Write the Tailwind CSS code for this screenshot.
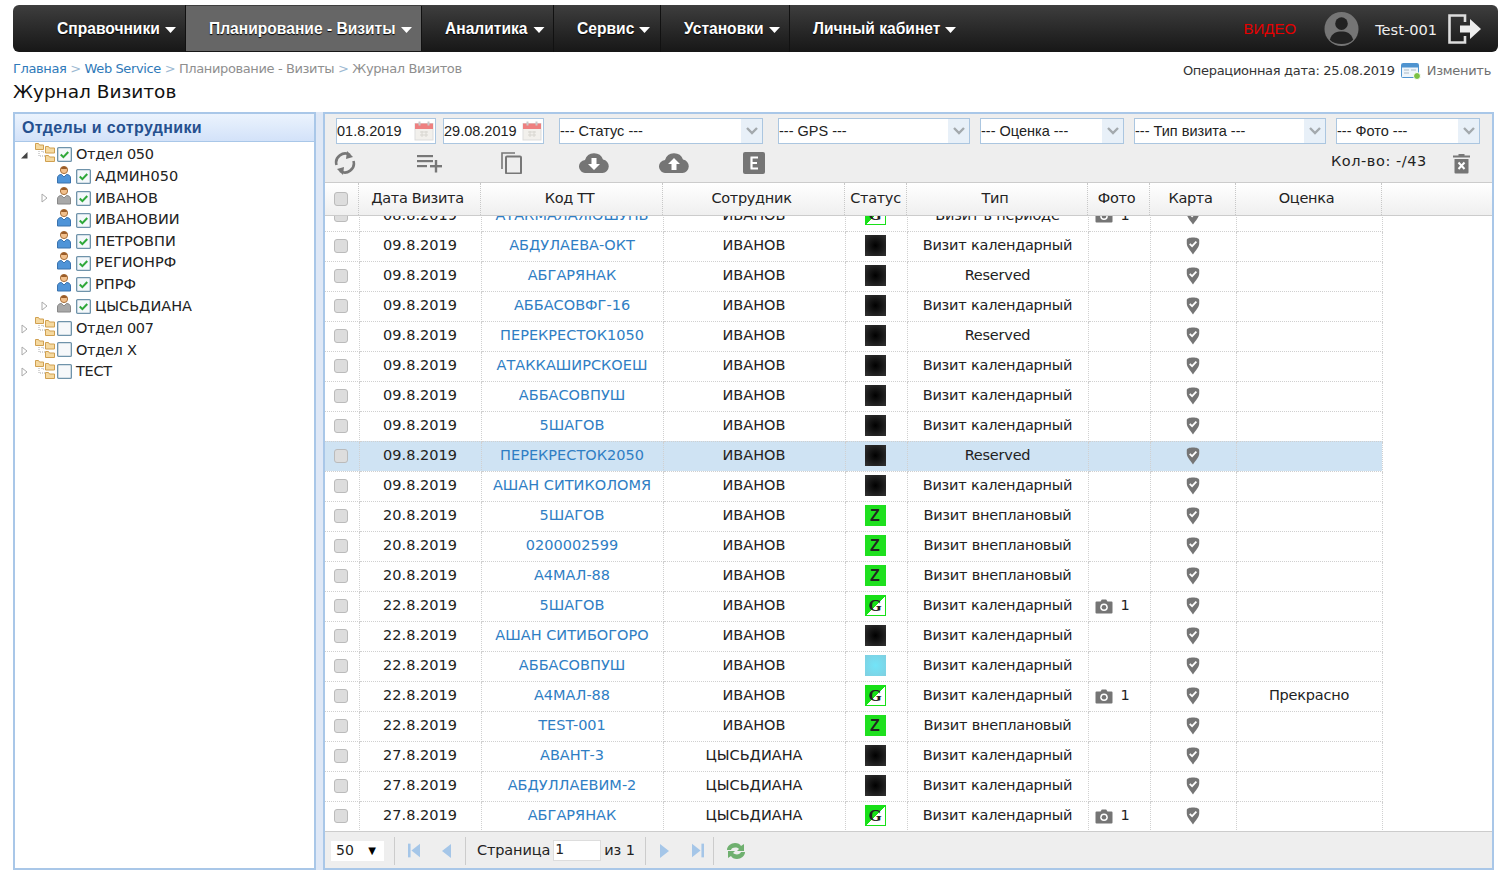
<!DOCTYPE html>
<html lang="ru"><head><meta charset="utf-8"><title>Журнал Визитов</title>
<script src="https://cdn.jsdelivr.net/npm/@tailwindcss/browser@4"></script></head>
<body class="w-[1504px] h-[879px] overflow-hidden bg-white font-['DejaVu_Sans',sans-serif] text-[14.5px] text-[#222]">
<svg class="hidden" xmlns="http://www.w3.org/2000/svg">
<symbol id="pin" viewBox="-1 -1 18 22"><path d="M8 .5c4 0 7 1 7 2.800v4c0 4-4 8-7 12.200C5 15.300 1 11.300 1 7.300v-4C1 1.500 4 .5 8 .5z" fill="#757575"/><path d="M4.300 7.500l2.700 2.700 4.800-5" fill="none" stroke="#fff" stroke-width="2"/></symbol>
<symbol id="cam" viewBox="0 0 18 15"><path d="M1.500 2.500h4l1.300-2h4.400l1.300 2h4a1 1 0 0 1 1 1v10a1 1 0 0 1-1 1h-15a1 1 0 0 1-1-1v-10a1 1 0 0 1 1-1z" fill="#757575"/><circle cx="9" cy="8.300" r="3.800" fill="#fff"/><circle cx="9" cy="8.300" r="2.300" fill="#757575"/></symbol>
<symbol id="cb" viewBox="0 0 16 16"><rect x=".7" y=".7" width="14.600" height="14.600" rx="1" fill="#f4f8fb" stroke="#6f93aa" stroke-width="1.400"/><path d="M4 8l2.800 2.800L12 5.300" fill="none" stroke="#2fa83a" stroke-width="2.200"/></symbol>
<symbol id="cb0" viewBox="0 0 16 16"><rect x=".7" y=".7" width="14.600" height="14.600" rx="1" fill="#f6f8fa" stroke="#6f93aa" stroke-width="1.400"/></symbol>
<symbol id="folders" viewBox="0 0 20 20"><path d="M4 7v7h6M7 7v3h4" fill="none" stroke="#aaa" stroke-dasharray="1 1"/><path d="M.5 1.500h3l1 1.500h4v4.500h-8z" fill="#f5d9a0" stroke="#d0a050"/><path d="M10.500 4.500h3l1 1.500h5v5h-9z" fill="#f5d9a0" stroke="#d0a050"/><path d="M10.500 13.500h3l1 1.500h5v4.500h-9z" fill="#f5d9a0" stroke="#d0a050"/></symbol>
<symbol id="user" viewBox="0 0 14 19"><circle cx="7" cy="5" r="3.600" fill="#f2c08c" stroke="#a8703c"/><path d="M3.500 3.500c1-2.500 6-2.500 7 0-2 .8-5 .8-7 0z" fill="#9a5c28"/><path d="M.5 18v-5c0-2.500 2-3.500 4-3.500l2.500 2.500 2.500-2.500c2 0 4 1 4 3.500v5z" fill="#4f94d8" stroke="#3a72ad"/></symbol>
<symbol id="userg" viewBox="0 0 14 19"><circle cx="7" cy="5" r="3.600" fill="#f2c08c" stroke="#a8703c"/><path d="M3.500 3.500c1-2.500 6-2.500 7 0-2 .8-5 .8-7 0z" fill="#9a5c28"/><path d="M.5 18v-5c0-2.500 2-3.500 4-3.500l2.500 2.500 2.500-2.500c2 0 4 1 4 3.500v5z" fill="#a8a8a8" stroke="#888"/></symbol>
<symbol id="cal" viewBox="0 0 20 20"><rect x="1" y="2.500" width="18" height="16.500" fill="#f2f0ec" stroke="#ddd"/><rect x="1" y="2.500" width="18" height="5.500" fill="#ee8080"/><rect x="4.500" y=".5" width="2" height="4" fill="#c9c9c9"/><rect x="13.500" y=".5" width="2" height="4" fill="#c9c9c9"/><path d="M6 11h8M6 14h8M8 10v6M12 10v6" stroke="#d8d6d0"/></symbol>
<symbol id="chev" viewBox="0 0 12 8"><path d="M1 1l5 5 5-5" fill="none" stroke="#a3a9ad" stroke-width="2.400"/></symbol>
<symbol id="caret" viewBox="0 0 11 6"><path d="M0 0h11L5.500 6z" fill="#fff"/></symbol>
</svg>

<nav class="ml-[13px] mt-[5px] w-[1485px] h-[47px] rounded-md bg-gradient-to-b from-[#3e3e3e] to-[#171717] flex items-stretch text-white font-['Liberation_Sans',sans-serif] font-bold text-[15.6px] [text-shadow:0_1px_1px_#000]">
  <a class="pl-[44px] pr-[9px] w-[173px] flex items-center gap-[5px] border-r border-[#111] whitespace-nowrap">Справочники <svg class="w-[11px] h-[6px] mt-[3px]"><use href="#caret"/></svg></a>
  <a class="pl-[23px] w-[236px] my-px flex items-center gap-[5px] bg-[#666] border-r border-[#111] whitespace-nowrap">Планирование - Визиты <svg class="w-[11px] h-[6px] mt-[3px]"><use href="#caret"/></svg></a>
  <a class="pl-[23px] w-[132px] flex items-center gap-[5px] border-r border-[#111] whitespace-nowrap">Аналитика <svg class="w-[12px] h-[6px] mt-[3px]"><use href="#caret"/></svg></a>
  <a class="pl-[23px] w-[107px] flex items-center gap-[5px] border-r border-[#111] whitespace-nowrap">Сервис <svg class="w-[11px] h-[6px] mt-[3px]"><use href="#caret"/></svg></a>
  <a class="pl-[23px] w-[129px] flex items-center gap-[5px] border-r border-[#111] whitespace-nowrap">Установки <svg class="w-[11px] h-[6px] mt-[3px]"><use href="#caret"/></svg></a>
  <a class="pl-[23px] flex items-center gap-[5px] whitespace-nowrap">Личный кабинет <svg class="w-[11px] h-[6px] mt-[3px]"><use href="#caret"/></svg></a>
  <div class="ml-auto flex items-center font-normal font-['DejaVu_Sans',sans-serif] [text-shadow:none]">
    <span class="text-[#e60000] font-['Liberation_Sans',sans-serif] text-[15px] mt-[1px]">ВИДЕО</span>
    <svg class="w-[35px] h-[36px] ml-[28px]" viewBox="0 0 36 36"><circle cx="18" cy="18" r="17.500" fill="#757575"/><circle cx="18" cy="12.500" r="6.500" fill="#222"/><path d="M6 29c2-7 7-8.500 12-8.500S28 22 30 29c-3 3-7 4.500-12 4.500S9 32 6 29z" fill="#222"/></svg>
    <span class="ml-[16px] text-[14.6px] text-[#eee] mt-[2px]">Test-001</span>
    <svg class="w-[34px] h-[30px] ml-[11px] mr-[16px]" viewBox="0 0 34 30" fill="none"><path d="M17 8V1.500H1.500v27H17V22" stroke="#ddd" stroke-width="2.600"/><path d="M12 11.500h10V5l11 10-11 10v-6.500H12z" fill="#eee"/></svg>
  </div>
</nav>

<header class="ml-[13px] w-[1478px] h-[60px] relative flex justify-between">
  <div>
    <div class="mt-[8px] h-[18px] text-[13px] leading-[18px] text-[#8f8f8f] tracking-[-0.38px] whitespace-nowrap"><a class="text-[#2f7ab9]">Главная</a> <span class="text-[#9db9d2]">&gt;</span> <a class="text-[#2f7ab9]">Web Service</a> <span class="text-[#9db9d2]">&gt;</span> Планирование - Визиты <span class="text-[#9db9d2]">&gt;</span> Журнал Визитов</div>
    <h1 class="mt-[2px] text-[18.500px] leading-[24px] text-[#111] whitespace-nowrap">Журнал Визитов</h1>
  </div>
  <div class="mt-[10px] h-[18px] flex items-center text-[13px] tracking-[-0.3px] text-[#333] whitespace-nowrap">Операционная дата: 25.08.2019
    <svg class="w-[20px] h-[18px] ml-[6px]" viewBox="0 0 20 18"><rect x=".5" y="1.500" width="17" height="14" rx="1" fill="#eef5fb" stroke="#4f94d0"/><rect x="1" y="2" width="16" height="3.500" fill="#4f94d0"/><path d="M3 8h5M3 11h5M10 8h5" stroke="#a9b9c6"/><circle cx="16" cy="14" r="3.500" fill="#7ac143" stroke="#fff"/></svg>
    <span class="ml-[6px] text-[#707070]">Изменить</span></div>
</header>

<main class="ml-[13px] w-[1481px] h-[758px] flex">
  <aside class="w-[303px] border-2 border-[#a9c7e8] flex flex-col">
    <div class="h-[28px] border-b border-[#a9c7e8] bg-gradient-to-b from-[#ebf3fd] to-[#d3e2f9] pl-[7px] pt-[1px] flex items-center font-['Liberation_Sans',sans-serif] font-bold text-[16px] text-[#25508f] tracking-[0.35px]">Отделы и сотрудники</div>
    <div class="pt-[2.5px] [&>div]:h-[21.6px] [&>div]:flex [&>div]:items-center [&>div]:whitespace-nowrap">
      <div><svg class="w-[8px] h-[8px] ml-[5px]" viewBox="0 0 8 8"><path d="M7.500 1v6.500H1z" fill="#444"/></svg><svg class="w-[20px] h-[20px] ml-[7px] -mt-[6px]"><use href="#folders"/></svg><svg class="w-[15px] h-[15px] ml-[2px] -mt-[2px]"><use href="#cb"/></svg><span class="ml-[4px] tracking-[-0.3px]">Отдел 050</span></div>
      <div><svg class="w-[14px] h-[19px] ml-[42px] -mt-[5px]"><use href="#user"/></svg><svg class="w-[15px] h-[15px] ml-[5px]"><use href="#cb"/></svg><span class="ml-[4px]">АДМИН050</span></div>
      <div><svg class="w-[7px] h-[10px] ml-[26px]" viewBox="0 0 7 10"><path d="M1 1l5 4-5 4z" fill="#fff" stroke="#aaa"/></svg><svg class="w-[14px] h-[19px] ml-[9px] -mt-[5px]"><use href="#userg"/></svg><svg class="w-[15px] h-[15px] ml-[5px]"><use href="#cb"/></svg><span class="ml-[4px]">ИВАНОВ</span></div>
      <div><svg class="w-[14px] h-[19px] ml-[42px] -mt-[5px]"><use href="#user"/></svg><svg class="w-[15px] h-[15px] ml-[5px]"><use href="#cb"/></svg><span class="ml-[4px]">ИВАНОВИИ</span></div>
      <div><svg class="w-[14px] h-[19px] ml-[42px] -mt-[5px]"><use href="#user"/></svg><svg class="w-[15px] h-[15px] ml-[5px]"><use href="#cb"/></svg><span class="ml-[4px]">ПЕТРОВПИ</span></div>
      <div><svg class="w-[14px] h-[19px] ml-[42px] -mt-[5px]"><use href="#user"/></svg><svg class="w-[15px] h-[15px] ml-[5px]"><use href="#cb"/></svg><span class="ml-[4px]">РЕГИОНРФ</span></div>
      <div><svg class="w-[14px] h-[19px] ml-[42px] -mt-[5px]"><use href="#user"/></svg><svg class="w-[15px] h-[15px] ml-[5px]"><use href="#cb"/></svg><span class="ml-[4px]">РПРФ</span></div>
      <div><svg class="w-[7px] h-[10px] ml-[26px]" viewBox="0 0 7 10"><path d="M1 1l5 4-5 4z" fill="#fff" stroke="#aaa"/></svg><svg class="w-[14px] h-[19px] ml-[9px] -mt-[5px]"><use href="#userg"/></svg><svg class="w-[15px] h-[15px] ml-[5px]"><use href="#cb"/></svg><span class="ml-[4px]">ЦЫСЬДИАНА</span></div>
      <div class="mt-[1px]"><svg class="w-[7px] h-[10px] ml-[6px]" viewBox="0 0 7 10"><path d="M1 1l5 4-5 4z" fill="#fff" stroke="#aaa"/></svg><svg class="w-[20px] h-[20px] ml-[7px] -mt-[6px]"><use href="#folders"/></svg><svg class="w-[15px] h-[15px] ml-[2px] -mt-[2px]"><use href="#cb0"/></svg><span class="ml-[4px] tracking-[-0.3px]">Отдел 007</span></div>
      <div><svg class="w-[7px] h-[10px] ml-[6px]" viewBox="0 0 7 10"><path d="M1 1l5 4-5 4z" fill="#fff" stroke="#aaa"/></svg><svg class="w-[20px] h-[20px] ml-[7px] -mt-[6px]"><use href="#folders"/></svg><svg class="w-[15px] h-[15px] ml-[2px] -mt-[2px]"><use href="#cb0"/></svg><span class="ml-[4px] tracking-[-0.3px]">Отдел Х</span></div>
      <div><svg class="w-[7px] h-[10px] ml-[6px]" viewBox="0 0 7 10"><path d="M1 1l5 4-5 4z" fill="#fff" stroke="#aaa"/></svg><svg class="w-[20px] h-[20px] ml-[7px] -mt-[6px]"><use href="#folders"/></svg><svg class="w-[15px] h-[15px] ml-[2px] -mt-[2px]"><use href="#cb0"/></svg><span class="ml-[4px] tracking-[-0.3px]">ТЕСТ</span></div>
    </div>
  </aside>
  <div class="w-[7px] bg-[#dfe8f6]"></div>
  <section class="w-[1171px] border-2 border-[#a9c7e8] flex flex-col">
    <div class="h-[69px] shrink-0 bg-[#eee] border-b border-[#ccc]">
      <div class="pt-[4px] pl-[11px] h-[30px] flex font-['Liberation_Sans',sans-serif] text-[14.500px] [&>div]:h-[26px] [&>div]:bg-white [&>div]:border [&>div]:border-[#abc6e0] [&>div]:flex [&>div]:items-center [&>div]:whitespace-nowrap [&>div>span:first-child]:pt-[1px]">
        <div class="w-[100px]"><span class="flex-1">01.8.2019</span><svg class="w-[20px] h-[20px] mr-[1px]"><use href="#cal"/></svg></div>
        <div class="w-[101px] ml-[7px]"><span class="flex-1">29.08.2019</span><svg class="w-[20px] h-[20px] mr-[1px]"><use href="#cal"/></svg></div>
        <div class="w-[204px] ml-[15px]"><span class="flex-1">--- Статус ---</span><span class="w-[21px] h-full bg-[#e8f0f8] flex items-center justify-center"><svg class="w-[12px] h-[8px]"><use href="#chev"/></svg></span></div>
        <div class="w-[192px] ml-[15px]"><span class="flex-1">--- GPS ---</span><span class="w-[21px] h-full bg-[#e8f0f8] flex items-center justify-center"><svg class="w-[12px] h-[8px]"><use href="#chev"/></svg></span></div>
        <div class="w-[144px] ml-[10px]"><span class="flex-1">--- Оценка ---</span><span class="w-[21px] h-full bg-[#e8f0f8] flex items-center justify-center"><svg class="w-[12px] h-[8px]"><use href="#chev"/></svg></span></div>
        <div class="w-[192px] ml-[10px]"><span class="flex-1">--- Тип визита ---</span><span class="w-[21px] h-full bg-[#e8f0f8] flex items-center justify-center"><svg class="w-[12px] h-[8px]"><use href="#chev"/></svg></span></div>
        <div class="w-[144px] ml-[10px]"><span class="flex-1">--- Фото ---</span><span class="w-[21px] h-full bg-[#e8f0f8] flex items-center justify-center"><svg class="w-[12px] h-[8px]"><use href="#chev"/></svg></span></div>
      </div>
      <div class="h-[34px] mt-[2px] flex items-center pl-[9px]">
        <svg class="w-[22px] h-[24px]" viewBox="0 0 22 24" fill="none"><path d="M2.500 14A9 9 0 0 1 16 4" stroke="#777" stroke-width="2.600"/><path d="M13 0l6 6-7 2z" fill="#777"/><path d="M19.500 10A9 9 0 0 1 6 20" stroke="#777" stroke-width="2.600"/><path d="M9 24l-6-6 7-2z" fill="#777"/></svg>
        <svg class="w-[25px] h-[20px] ml-[61px]" viewBox="0 0 25 20" fill="#777"><rect x="0" y="2" width="16" height="2.200"/><rect x="0" y="7" width="16" height="2.200"/><rect x="0" y="12" width="10" height="2.200"/><rect x="13" y="12" width="12" height="2.400"/><rect x="17.800" y="7" width="2.400" height="12.500"/></svg>
        <svg class="w-[21px] h-[22px] ml-[59px]" viewBox="0 0 21 22" fill="none" stroke="#777"><path d="M1 17V1h13" stroke-width="1.600"/><rect x="5" y="4.500" width="15" height="17" rx="1" stroke-width="2"/></svg>
        <svg class="w-[30px] h-[20px] ml-[57px]" viewBox="0 0 30 20"><path d="M7 20a6.500 6.500 0 0 1-1-13 9.500 9.500 0 0 1 18-.5A6.800 6.800 0 0 1 23.500 20z" fill="#757575"/><path d="M12.500 5h5v6h3.500L15 17l-6-6h3.500z" fill="#fff"/></svg>
        <svg class="w-[30px] h-[20px] ml-[50px]" viewBox="0 0 30 20"><path d="M7 20a6.500 6.500 0 0 1-1-13 9.500 9.500 0 0 1 18-.5A6.800 6.800 0 0 1 23.500 20z" fill="#757575"/><path d="M12.500 17h5v-6h3.500L15 5l-6 6h3.500z" fill="#fff"/></svg>
        <svg class="w-[22px] h-[22px] ml-[54px]" viewBox="0 0 22 22"><rect width="22" height="22" rx="2" fill="#757575"/><path d="M7.500 5.500h7.500M7.500 11h6.500M7.500 16.500h7.500M8.500 5.500v11" stroke="#fff" stroke-width="2.200" fill="none"/></svg>
        <span class="ml-[566px] -mt-[3px] whitespace-nowrap tracking-[0.55px]">Кол-во: -/43</span>
        <svg class="w-[17px] h-[21px] ml-[26px]" viewBox="0 0 17 21"><path d="M0 2.500h5.500V1h6v1.500H17v2H0z" fill="#777"/><path d="M1.500 6h14v13.500a1 1 0 0 1-1 1h-12a1 1 0 0 1-1-1z" fill="#757575"/><path d="M5.500 9.500l6 6.500m0-6.500l-6 6.500" stroke="#fff" stroke-width="2"/></svg>
      </div>
    </div>
    <div class="h-[33px] shrink-0 border-b border-[#ccc] bg-gradient-to-b from-white to-[#efefef] tracking-[-0.3px] grid grid-cols-[34px_122px_182px_182px_62px_181px_62px_86px_146px] items-stretch [&>div]:border-r [&>div]:border-dotted [&>div]:border-[#c8c8c8] [&>div]:flex [&>div]:items-center [&>div]:justify-center [&>div]:pr-[4px] [&>div:first-child]:pr-[2px] [&>div:nth-child(5)]:pr-0">
      <div><span class="w-[14px] h-[14px] rounded-[3px] bg-[#ddd] border border-[#bbb]"></span></div><div>Дата Визита</div><div>Код ТТ</div><div>Сотрудник</div><div>Статус</div><div>Тип</div><div>Фото</div><div>Карта</div><div>Оценка</div>
    </div>
    <div class="flex-1 overflow-hidden bg-white">
      <table class="w-[1057px] table-fixed border-collapse -mt-[15px] [&_td]:h-[30px] [&_td]:p-0 [&_td]:text-center [&_td]:border-r [&_td]:border-b [&_td]:border-dotted [&_td]:border-[#d0d0d0] [&_td]:whitespace-nowrap [&_td:nth-child(3)]:text-[#2f7ec4] [&_td:nth-child(1)]:pr-[2px] [&_td:nth-child(1)]:pb-[1px] [&_td:nth-child(5)]:pr-[2px] [&_td:nth-child(5)]:pb-[2px] [&_td:nth-child(6)]:tracking-[-0.22px] [&_td:nth-child(9)]:tracking-[-0.22px]">
        <colgroup><col class="w-[34px]"><col class="w-[122px]"><col class="w-[182px]"><col class="w-[182px]"><col class="w-[62px]"><col class="w-[181px]"><col class="w-[62px]"><col class="w-[86px]"><col class="w-[146px]"></colgroup>
        <tbody>
<tr><td><span class="block mx-auto w-[14px] h-[14px] rounded-[3px] bg-[#ddd] border border-[#bbb]"></span></td><td>08.8.2019</td><td>АТАКМАЛАЯЮШУНЬ</td><td>ИВАНОВ</td><td><span class="block mx-auto w-[21px] h-[21px] border border-[#18e018] bg-[linear-gradient(135deg,#18e018_50%,#fff_50%)] text-[17px] font-bold font-['Liberation_Serif',serif] leading-[19px]">G</span></td><td>Визит в периоде</td><td><span class="flex items-center justify-center gap-[7px] pr-[13px]"><svg class="w-[18px] h-[15px]"><use href="#cam"/></svg>1</span></td><td><svg class="block mx-auto w-[16px] h-[20px]"><use href="#pin"/></svg></td><td></td></tr>
<tr><td><span class="block mx-auto w-[14px] h-[14px] rounded-[3px] bg-[#ddd] border border-[#bbb]"></span></td><td>09.8.2019</td><td>АБДУЛАЕВА-ОКТ</td><td>ИВАНОВ</td><td><span class="block mx-auto w-[21px] h-[21px] bg-[radial-gradient(circle,#000,#333)]"></span></td><td>Визит календарный</td><td></td><td><svg class="block mx-auto w-[16px] h-[20px]"><use href="#pin"/></svg></td><td></td></tr>
<tr><td><span class="block mx-auto w-[14px] h-[14px] rounded-[3px] bg-[#ddd] border border-[#bbb]"></span></td><td>09.8.2019</td><td>АБГАРЯНАК</td><td>ИВАНОВ</td><td><span class="block mx-auto w-[21px] h-[21px] bg-[radial-gradient(circle,#000,#333)]"></span></td><td>Reserved</td><td></td><td><svg class="block mx-auto w-[16px] h-[20px]"><use href="#pin"/></svg></td><td></td></tr>
<tr><td><span class="block mx-auto w-[14px] h-[14px] rounded-[3px] bg-[#ddd] border border-[#bbb]"></span></td><td>09.8.2019</td><td>АББАСОВФГ-16</td><td>ИВАНОВ</td><td><span class="block mx-auto w-[21px] h-[21px] bg-[radial-gradient(circle,#000,#333)]"></span></td><td>Визит календарный</td><td></td><td><svg class="block mx-auto w-[16px] h-[20px]"><use href="#pin"/></svg></td><td></td></tr>
<tr><td><span class="block mx-auto w-[14px] h-[14px] rounded-[3px] bg-[#ddd] border border-[#bbb]"></span></td><td>09.8.2019</td><td>ПЕРЕКРЕСТОК1050</td><td>ИВАНОВ</td><td><span class="block mx-auto w-[21px] h-[21px] bg-[radial-gradient(circle,#000,#333)]"></span></td><td>Reserved</td><td></td><td><svg class="block mx-auto w-[16px] h-[20px]"><use href="#pin"/></svg></td><td></td></tr>
<tr><td><span class="block mx-auto w-[14px] h-[14px] rounded-[3px] bg-[#ddd] border border-[#bbb]"></span></td><td>09.8.2019</td><td>АТАККАШИРСКОЕШ</td><td>ИВАНОВ</td><td><span class="block mx-auto w-[21px] h-[21px] bg-[radial-gradient(circle,#000,#333)]"></span></td><td>Визит календарный</td><td></td><td><svg class="block mx-auto w-[16px] h-[20px]"><use href="#pin"/></svg></td><td></td></tr>
<tr><td><span class="block mx-auto w-[14px] h-[14px] rounded-[3px] bg-[#ddd] border border-[#bbb]"></span></td><td>09.8.2019</td><td>АББАСОВПУШ</td><td>ИВАНОВ</td><td><span class="block mx-auto w-[21px] h-[21px] bg-[radial-gradient(circle,#000,#333)]"></span></td><td>Визит календарный</td><td></td><td><svg class="block mx-auto w-[16px] h-[20px]"><use href="#pin"/></svg></td><td></td></tr>
<tr><td><span class="block mx-auto w-[14px] h-[14px] rounded-[3px] bg-[#ddd] border border-[#bbb]"></span></td><td>09.8.2019</td><td>5ШАГОВ</td><td>ИВАНОВ</td><td><span class="block mx-auto w-[21px] h-[21px] bg-[radial-gradient(circle,#000,#333)]"></span></td><td>Визит календарный</td><td></td><td><svg class="block mx-auto w-[16px] h-[20px]"><use href="#pin"/></svg></td><td></td></tr>
<tr class="bg-[#cfe3f3]"><td><span class="block mx-auto w-[14px] h-[14px] rounded-[3px] bg-[#ddd] border border-[#bbb]"></span></td><td>09.8.2019</td><td>ПЕРЕКРЕСТОК2050</td><td>ИВАНОВ</td><td><span class="block mx-auto w-[21px] h-[21px] bg-[radial-gradient(circle,#000,#333)]"></span></td><td>Reserved</td><td></td><td><svg class="block mx-auto w-[16px] h-[20px]"><use href="#pin"/></svg></td><td></td></tr>
<tr><td><span class="block mx-auto w-[14px] h-[14px] rounded-[3px] bg-[#ddd] border border-[#bbb]"></span></td><td>09.8.2019</td><td>АШАН СИТИКОЛОМЯ</td><td>ИВАНОВ</td><td><span class="block mx-auto w-[21px] h-[21px] bg-[radial-gradient(circle,#000,#333)]"></span></td><td>Визит календарный</td><td></td><td><svg class="block mx-auto w-[16px] h-[20px]"><use href="#pin"/></svg></td><td></td></tr>
<tr><td><span class="block mx-auto w-[14px] h-[14px] rounded-[3px] bg-[#ddd] border border-[#bbb]"></span></td><td>20.8.2019</td><td>5ШАГОВ</td><td>ИВАНОВ</td><td><span class="block mx-auto w-[21px] h-[21px] bg-[#1fe01f] text-[16px] font-bold font-['Liberation_Sans',sans-serif] leading-[21px]">Z</span></td><td>Визит внеплановый</td><td></td><td><svg class="block mx-auto w-[16px] h-[20px]"><use href="#pin"/></svg></td><td></td></tr>
<tr><td><span class="block mx-auto w-[14px] h-[14px] rounded-[3px] bg-[#ddd] border border-[#bbb]"></span></td><td>20.8.2019</td><td>0200002599</td><td>ИВАНОВ</td><td><span class="block mx-auto w-[21px] h-[21px] bg-[#1fe01f] text-[16px] font-bold font-['Liberation_Sans',sans-serif] leading-[21px]">Z</span></td><td>Визит внеплановый</td><td></td><td><svg class="block mx-auto w-[16px] h-[20px]"><use href="#pin"/></svg></td><td></td></tr>
<tr><td><span class="block mx-auto w-[14px] h-[14px] rounded-[3px] bg-[#ddd] border border-[#bbb]"></span></td><td>20.8.2019</td><td>А4МАЛ-88</td><td>ИВАНОВ</td><td><span class="block mx-auto w-[21px] h-[21px] bg-[#1fe01f] text-[16px] font-bold font-['Liberation_Sans',sans-serif] leading-[21px]">Z</span></td><td>Визит внеплановый</td><td></td><td><svg class="block mx-auto w-[16px] h-[20px]"><use href="#pin"/></svg></td><td></td></tr>
<tr><td><span class="block mx-auto w-[14px] h-[14px] rounded-[3px] bg-[#ddd] border border-[#bbb]"></span></td><td>22.8.2019</td><td>5ШАГОВ</td><td>ИВАНОВ</td><td><span class="block mx-auto w-[21px] h-[21px] border border-[#18e018] bg-[linear-gradient(135deg,#18e018_50%,#fff_50%)] text-[17px] font-bold font-['Liberation_Serif',serif] leading-[19px]">G</span></td><td>Визит календарный</td><td><span class="flex items-center justify-center gap-[7px] pr-[13px]"><svg class="w-[18px] h-[15px]"><use href="#cam"/></svg>1</span></td><td><svg class="block mx-auto w-[16px] h-[20px]"><use href="#pin"/></svg></td><td></td></tr>
<tr><td><span class="block mx-auto w-[14px] h-[14px] rounded-[3px] bg-[#ddd] border border-[#bbb]"></span></td><td>22.8.2019</td><td>АШАН СИТИБОГОРО</td><td>ИВАНОВ</td><td><span class="block mx-auto w-[21px] h-[21px] bg-[radial-gradient(circle,#000,#333)]"></span></td><td>Визит календарный</td><td></td><td><svg class="block mx-auto w-[16px] h-[20px]"><use href="#pin"/></svg></td><td></td></tr>
<tr><td><span class="block mx-auto w-[14px] h-[14px] rounded-[3px] bg-[#ddd] border border-[#bbb]"></span></td><td>22.8.2019</td><td>АББАСОВПУШ</td><td>ИВАНОВ</td><td><span class="block mx-auto w-[21px] h-[21px] bg-[radial-gradient(circle,#72e4f8,#80cfe0)]"></span></td><td>Визит календарный</td><td></td><td><svg class="block mx-auto w-[16px] h-[20px]"><use href="#pin"/></svg></td><td></td></tr>
<tr><td><span class="block mx-auto w-[14px] h-[14px] rounded-[3px] bg-[#ddd] border border-[#bbb]"></span></td><td>22.8.2019</td><td>А4МАЛ-88</td><td>ИВАНОВ</td><td><span class="block mx-auto w-[21px] h-[21px] border border-[#18e018] bg-[linear-gradient(135deg,#18e018_50%,#fff_50%)] text-[17px] font-bold font-['Liberation_Serif',serif] leading-[19px]">G</span></td><td>Визит календарный</td><td><span class="flex items-center justify-center gap-[7px] pr-[13px]"><svg class="w-[18px] h-[15px]"><use href="#cam"/></svg>1</span></td><td><svg class="block mx-auto w-[16px] h-[20px]"><use href="#pin"/></svg></td><td>Прекрасно</td></tr>
<tr><td><span class="block mx-auto w-[14px] h-[14px] rounded-[3px] bg-[#ddd] border border-[#bbb]"></span></td><td>22.8.2019</td><td>TEST-001</td><td>ИВАНОВ</td><td><span class="block mx-auto w-[21px] h-[21px] bg-[#1fe01f] text-[16px] font-bold font-['Liberation_Sans',sans-serif] leading-[21px]">Z</span></td><td>Визит внеплановый</td><td></td><td><svg class="block mx-auto w-[16px] h-[20px]"><use href="#pin"/></svg></td><td></td></tr>
<tr><td><span class="block mx-auto w-[14px] h-[14px] rounded-[3px] bg-[#ddd] border border-[#bbb]"></span></td><td>27.8.2019</td><td>АВАНТ-3</td><td>ЦЫСЬДИАНА</td><td><span class="block mx-auto w-[21px] h-[21px] bg-[radial-gradient(circle,#000,#333)]"></span></td><td>Визит календарный</td><td></td><td><svg class="block mx-auto w-[16px] h-[20px]"><use href="#pin"/></svg></td><td></td></tr>
<tr><td><span class="block mx-auto w-[14px] h-[14px] rounded-[3px] bg-[#ddd] border border-[#bbb]"></span></td><td>27.8.2019</td><td>АБДУЛЛАЕВИМ-2</td><td>ЦЫСЬДИАНА</td><td><span class="block mx-auto w-[21px] h-[21px] bg-[radial-gradient(circle,#000,#333)]"></span></td><td>Визит календарный</td><td></td><td><svg class="block mx-auto w-[16px] h-[20px]"><use href="#pin"/></svg></td><td></td></tr>
<tr><td><span class="block mx-auto w-[14px] h-[14px] rounded-[3px] bg-[#ddd] border border-[#bbb]"></span></td><td>27.8.2019</td><td>АБГАРЯНАК</td><td>ЦЫСЬДИАНА</td><td><span class="block mx-auto w-[21px] h-[21px] border border-[#18e018] bg-[linear-gradient(135deg,#18e018_50%,#fff_50%)] text-[17px] font-bold font-['Liberation_Serif',serif] leading-[19px]">G</span></td><td>Визит календарный</td><td><span class="flex items-center justify-center gap-[7px] pr-[13px]"><svg class="w-[18px] h-[15px]"><use href="#cam"/></svg>1</span></td><td><svg class="block mx-auto w-[16px] h-[20px]"><use href="#pin"/></svg></td><td></td></tr>
        </tbody>
      </table>
    </div>
    <footer class="h-[37px] shrink-0 bg-[#eee] border-t border-[#ccc] flex items-center pl-[6px] pt-[1px] whitespace-nowrap">
      <div class="w-[53px] h-[20px] bg-white flex items-center pl-[5px] justify-between pr-[8px] text-[14px]">50 <span class="text-[10px] text-black">▼</span></div>
      <span class="w-px h-[28px] bg-[#ccc] ml-[10px]"></span>
      <svg class="w-[12px] h-[15px] ml-[13px]" viewBox="0 0 14 16"><rect width="3" height="16" fill="#a5c6e8"/><path d="M14 0v16L4 8z" fill="#a5c6e8"/></svg>
      <svg class="w-[9px] h-[14px] ml-[22px]" viewBox="0 0 9 14"><path d="M9 0v14L0 7z" fill="#a5c6e8"/></svg>
      <span class="w-px h-[28px] bg-[#ccc] ml-[14px]"></span>
      <span class="ml-[11px] tracking-[-0.15px]">Страница</span>
      <span class="ml-[3px] w-[48px] h-[21px] bg-white border border-[#ddd] text-[14px] leading-[17px] pl-[1px]">1</span>
      <span class="ml-[3px]">из 1</span>
      <span class="w-px h-[28px] bg-[#ccc] ml-[10px]"></span>
      <svg class="w-[9px] h-[14px] ml-[14px]" viewBox="0 0 9 14"><path d="M0 0v14l9-7z" fill="#a5c6e8"/></svg>
      <svg class="w-[12px] h-[15px] ml-[23px]" viewBox="0 0 14 16"><path d="M0 0v16l10-8z" fill="#a5c6e8"/><rect x="11" width="3" height="16" fill="#a5c6e8"/></svg>
      <span class="w-px h-[28px] bg-[#ccc] ml-[9px]"></span>
      <svg class="w-[20px] h-[18px] ml-[12px]" viewBox="0 0 20 18" fill="#6fb06f"><path d="M1 8c0-4 4-7 8-7 3 0 5 1 6 3l3-2v7h-7l2-2C11 5 6 5 5 8z"/><path d="M19 10c0 4-4 7-8 7-3 0-5-1-6-3l-3 2V9h7l-2 2c2 2 7 2 8-1z"/></svg>
    </footer>
  </section>
</main>
</body></html>
